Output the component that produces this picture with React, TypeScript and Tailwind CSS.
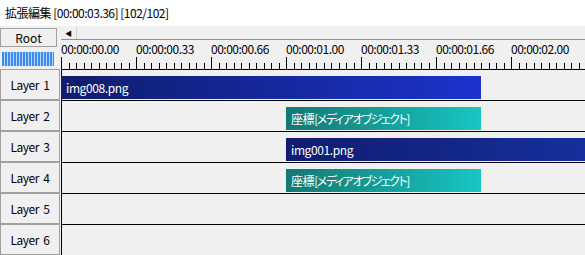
import React from "react";

const F = { fontFamily: '"Noto Sans CJK JP", "Noto Sans", sans-serif' };

function Ruler() {
  const ticks: React.ReactNode[] = [];
  for (let j = 0; j <= 70; j++) {
    const x = Math.round(7.5 * j) + 0.5;
    const major = j % 10 === 0;
    ticks.push(
      <line key={j} x1={x} x2={x} y1={major ? 17 : 23} y2={29} stroke="#000" strokeWidth={1} />
    );
  }
  const labels = ["00:00:00.00", "00:00:00.33", "00:00:00.66", "00:00:01.00", "00:00:01.33", "00:00:01.66", "00:00:02.00"];
  return (
    <div className="relative h-[29px]">
      <div className="flex pt-[1px] text-[12px] leading-[16px] tracking-[-0.5px] text-black whitespace-nowrap">
        {labels.map((l) => (
          <span key={l} className="w-[75px] shrink-0">{l}</span>
        ))}
      </div>
      <svg className="absolute left-0 top-0" width={524} height={29}>
        {ticks}
      </svg>
    </div>
  );
}

type Clip = { left: number; width: number; text: string; rest?: string; bg: string };

const rows: (Clip | null)[] = [
  { left: 0, width: 420, text: "img008.png", bg: "bg-[linear-gradient(90deg,#0f1d6c,#1b33cc)]" },
  { left: 225, width: 195, text: "座標", rest: "[メディアオブジェクト]", bg: "bg-[linear-gradient(90deg,#137872,#18c6c2)]" },
  { left: 225, width: 300, text: "img001.png", bg: "bg-[linear-gradient(90deg,#101c72,#15309c)]" },
  { left: 225, width: 195, text: "座標", rest: "[メディアオブジェクト]", bg: "bg-[linear-gradient(90deg,#137872,#18c6c2)]" },
  null,
  null,
];

export default function App() {
  return (
    <div className="w-[585px] h-[255px] overflow-hidden bg-[#f0f0f0] text-black" style={F}>
      <div className="h-[26px] bg-white flex items-center pl-[5px] text-[12px] tracking-[-0.5px] whitespace-nowrap">
        拡張編集 [00:00:03.36] [102/102]
      </div>
      <div className="flex">
        <div className="w-[61px] shrink-0 flex flex-col">
          <div className="mt-[2px] w-[57px] h-[19px] border border-[#a0a0a0] bg-[#f0f0f0] flex items-center justify-center text-[12px]">
            Root
          </div>
          <div className="mt-[5px] ml-[2px] w-[52px] h-[14px] bg-[repeating-linear-gradient(90deg,#3b8cf0_0px,#3b8cf0_2px,#b8d4f8_2px,#b8d4f8_3px)]" />
          <div className="mt-[3px] flex flex-col">
            {rows.map((_, i) => (
              <div
                key={i}
                className="w-[60px] h-[31px] border border-[#a0a0a0] bg-[#f0f0f0] flex items-center justify-center text-[12px] tracking-[-0.5px] whitespace-pre"
              >
                {`Layer  ${i + 1}`}
              </div>
            ))}
          </div>
        </div>
        <div className="flex-1 flex flex-col">
          <div className="h-[13px] flex bg-[#f0f0f0]">
            <div className="mt-[1px] w-[16px] h-[12px] border-r border-[#d0d0d0] flex items-center justify-center text-[7px] leading-none">
              ◀
            </div>
          </div>
          <div className="h-[1px] bg-[#909090]" />
          <Ruler />
          {rows.map((c, i) => (
            <div key={i} className="relative h-[31px] border-t border-l border-black">
              {c && (
                <div
                  className={`absolute top-[6px] h-[23px] flex items-center pl-[5px] text-white text-[12px] tracking-[-0.4px] [font-feature-settings:'palt'] whitespace-nowrap ${c.bg}`}
                  style={{ left: c.left - 1, width: c.width }}
                >
                  {c.text}
                  {c.rest && <span className="tracking-[-1.5px]">{c.rest}</span>}
                </div>
              )}
            </div>
          ))}
        </div>
      </div>
    </div>
  );
}
